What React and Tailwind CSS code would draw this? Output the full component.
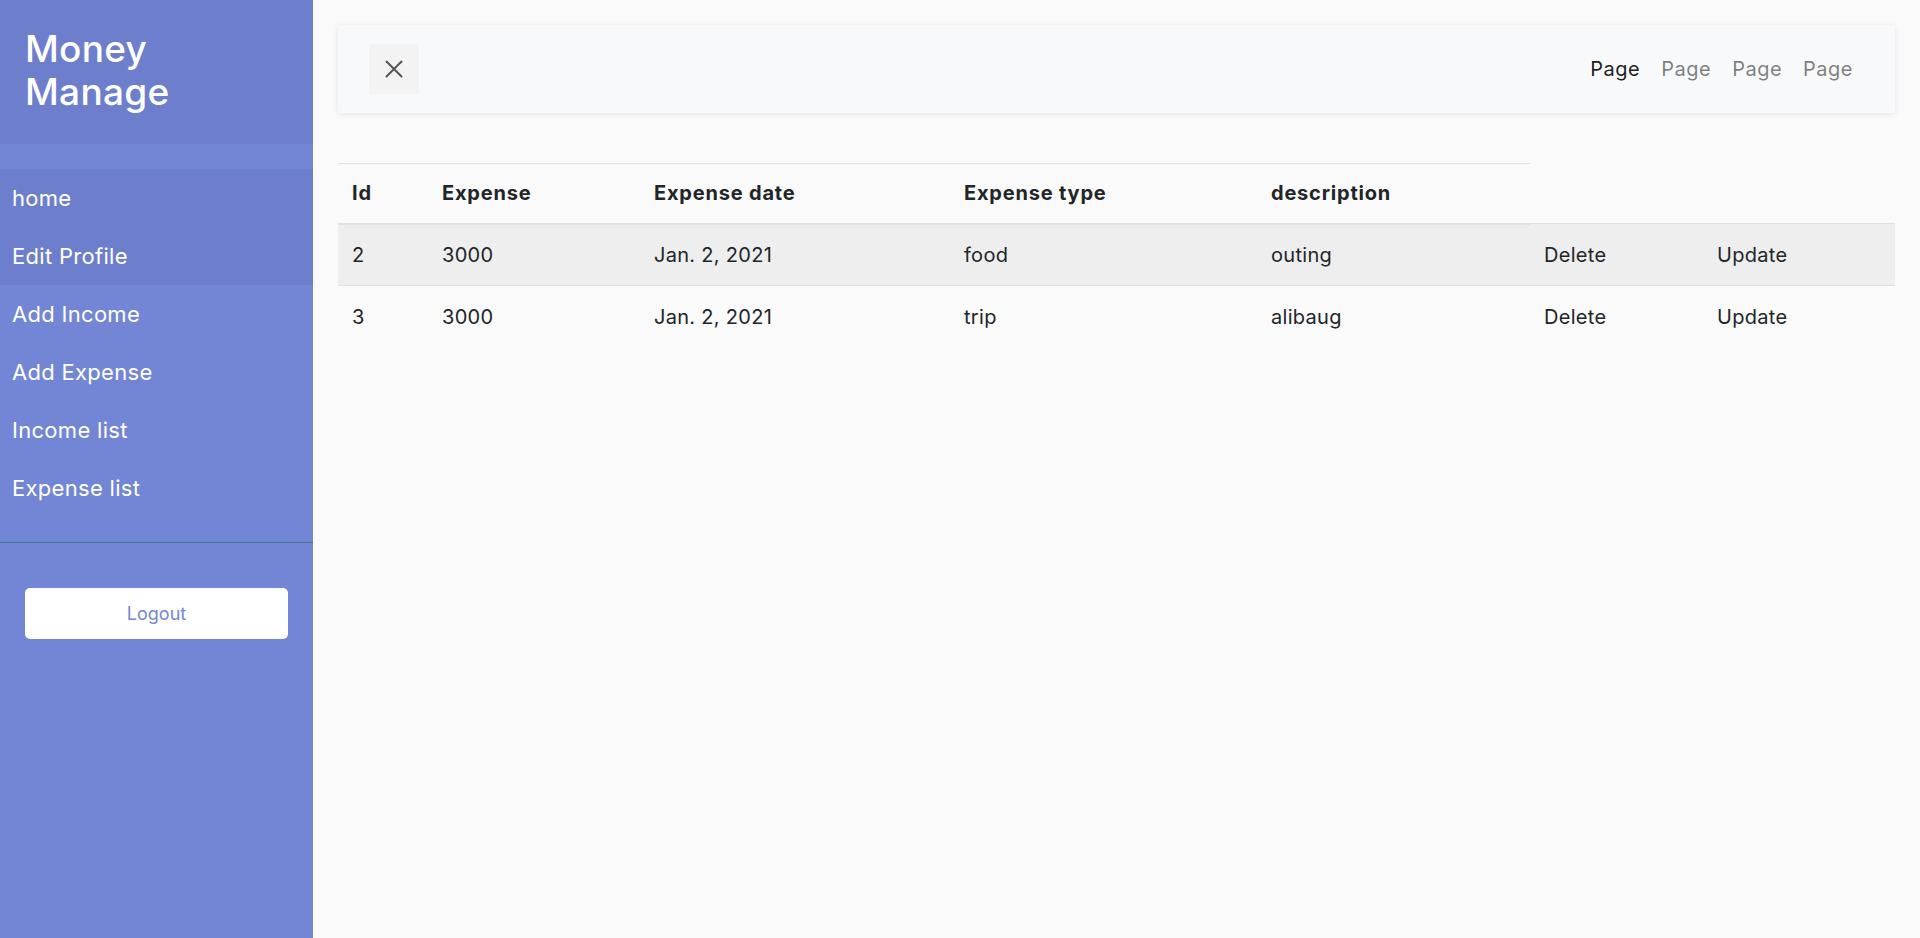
import { X } from 'lucide-react';

const links = [
	{ name: 'home', active: true },
	{ name: 'Edit Profile', active: true },
	{ name: 'Add Income' },
	{ name: 'Add Expense' },
	{ name: 'Income list' },
	{ name: 'Expense list' },
];

const expenses = [
	{ id: 2, amount: 3000, date: 'Jan. 2, 2021', type: 'food', description: 'outing' },
	{ id: 3, amount: 3000, date: 'Jan. 2, 2021', type: 'trip', description: 'alibaug' },
];

const Sidebar = () => (
	<nav className="w-[313px] shrink-0 min-h-screen bg-[#7386d5] text-white">
		{/* Header */}
		<div className="h-[144px] bg-[#6d7fcc] pl-[25px] pt-[27px]">
			<h3 className="text-[37px] leading-[43px] font-medium tracking-[0.3px]">
				Money
				<br />
				Manage
			</h3>
		</div>

		{/* Links */}
		<ul className="pt-[25px] pb-[25px] border-b border-[#47748b]">
			{links.map((link, i) => (
				<li key={i} className={link.active ? 'bg-[#6d7fcc]' : ''}>
					<a href="#" className="block pl-[12px] py-[10px] text-[22px] leading-[38px] tracking-[0.3px]">
						{link.name}
					</a>
				</li>
			))}
		</ul>

		{/* Logout */}
		<div className="px-[25px] pt-[45px]">
			<button className="w-[263px] h-[51px] rounded-[5px] bg-white text-[#7386d5] text-[18px]">
				Logout
			</button>
		</div>
	</nav>
);

const Navbar = () => (
	<div className="h-[88px] bg-[#f8f9fa] shadow-[0_1px_6px_rgba(0,0,0,0.09)] flex items-center justify-between pl-[31px] pr-[42px]">
		<button className="w-[50px] h-[50px] bg-[#f3f3f3] flex items-center justify-center text-[#555]">
			<X size={30} strokeWidth={1.6} />
		</button>
		<ul className="flex gap-[21px] text-[20px] tracking-[0.5px]">
			<li className="text-black/90">Page</li>
			<li className="text-black/50">Page</li>
			<li className="text-black/50">Page</li>
			<li className="text-black/50">Page</li>
		</ul>
	</div>
);

const ExpenseTable = () => (
	<table className="w-full mt-[50px] border-collapse table-fixed text-[#212529] text-[20px] tracking-[0.3px]">
		<colgroup>
			<col className="w-[90px]" />
			<col className="w-[212px]" />
			<col className="w-[310px]" />
			<col className="w-[307px]" />
			<col className="w-[273px]" />
			<col className="w-[173px]" />
			<col />
		</colgroup>
		<thead>
			<tr>
				{['Id', 'Expense', 'Expense date', 'Expense type', 'description'].map((h) => (
					<th
						key={h}
						className="h-[60px] pl-[14px] text-left font-bold tracking-[0.8px] border-t border-b-2 border-[#dee2e6]"
					>
						{h}
					</th>
				))}
			</tr>
		</thead>
		<tbody>
			{expenses.map((e, i) => (
				<tr key={e.id} className={i % 2 === 0 ? 'bg-[#eeeeee]' : ''}>
					{[e.id, e.amount, e.date, e.type, e.description, 'Delete', 'Update'].map((c, j) => (
						<td key={j} className="h-[62px] pl-[14px] border-t border-[#dee2e6]">
							{c}
						</td>
					))}
				</tr>
			))}
		</tbody>
	</table>
);

export default function App() {
	return (
		<div className="flex min-h-screen bg-[#fafafa] font-['Inter','Noto_Sans',sans-serif]">
			<Sidebar />
			<main className="flex-1 pt-[25px] px-[25px]">
				<Navbar />
				<ExpenseTable />
			</main>
		</div>
	);
}
